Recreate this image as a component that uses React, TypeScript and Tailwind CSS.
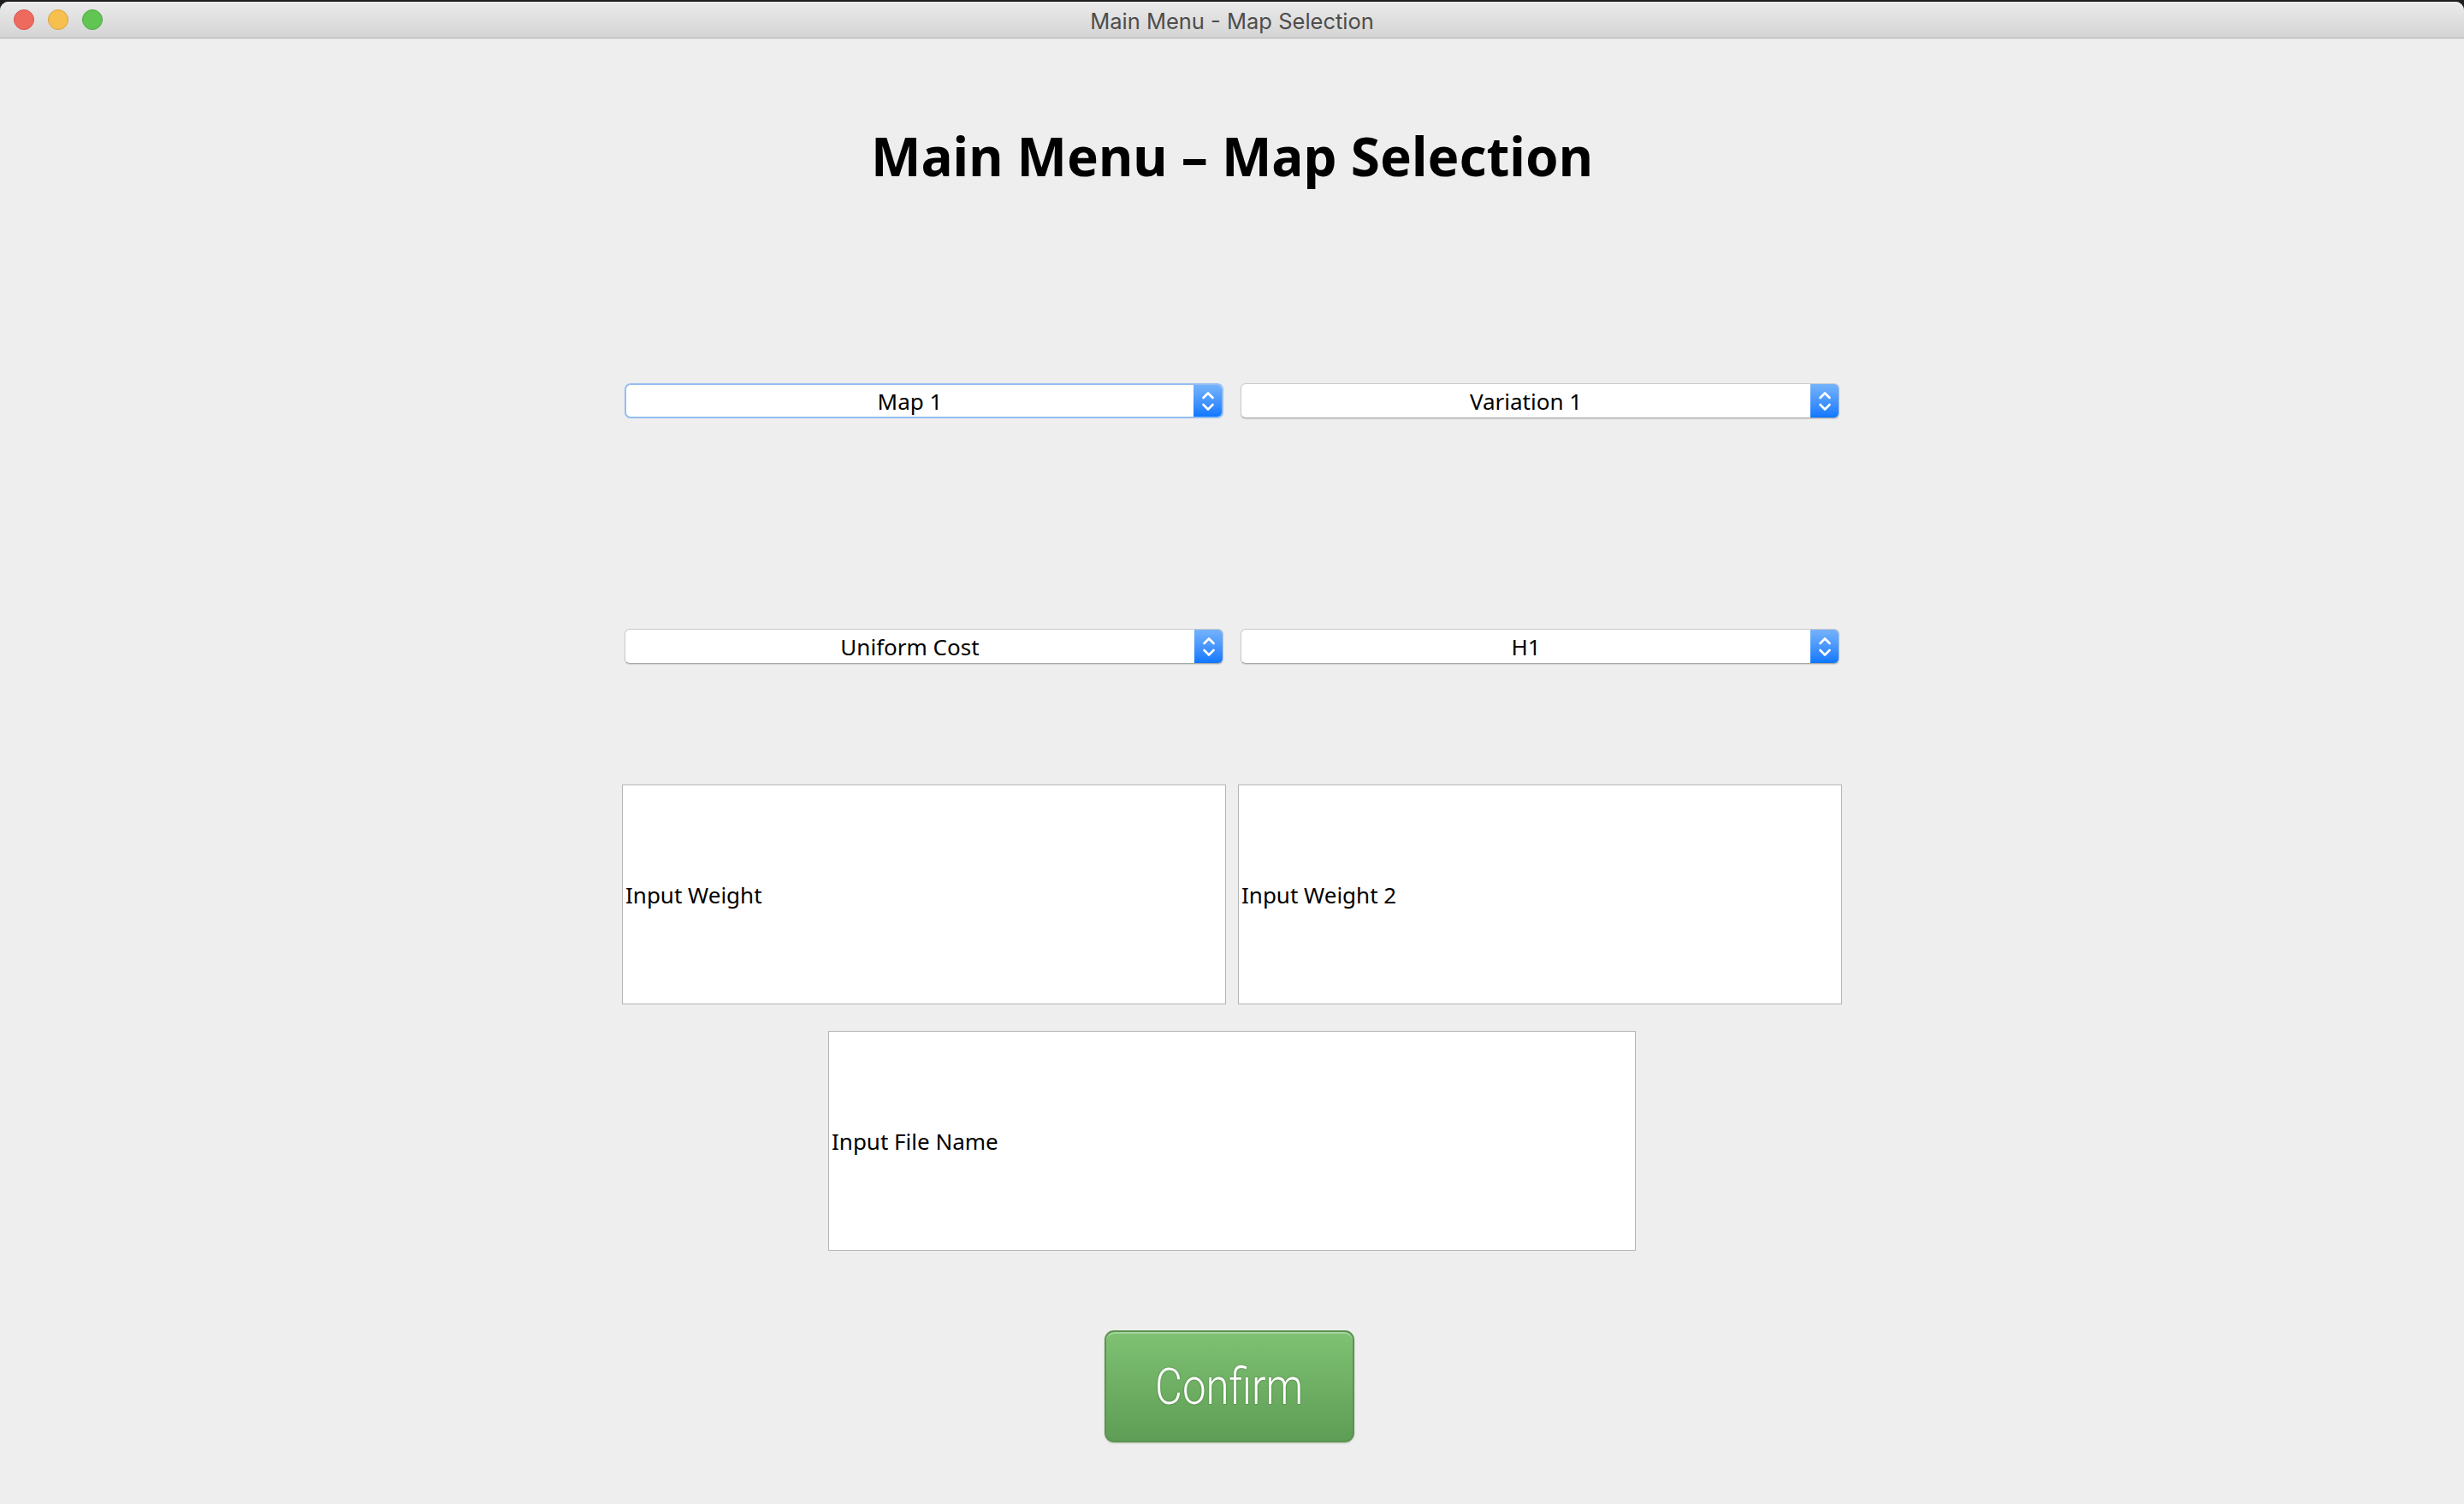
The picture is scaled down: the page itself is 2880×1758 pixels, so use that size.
import React from "react";

const sans = { fontFamily: '"Noto Sans", "Open Sans", sans-serif' };

function Chevrons() {
  return (
    <svg width="16" height="26" viewBox="0 0 16 26" fill="none" stroke="white" strokeWidth="2.6" strokeLinecap="round" strokeLinejoin="round">
      <path d="M2.5 9 L8 3.5 L13.5 9" />
      <path d="M2.5 17 L8 22.5 L13.5 17" />
    </svg>
  );
}

function Combo({ label, focused = false }: { label: string; focused?: boolean }) {
  return (
    <div
      className={
        focused
          ? "flex h-[41px] w-[700px] overflow-hidden rounded-[7px] border-2 border-[#93bdf2] bg-white"
          : "flex h-[41px] w-[700px] overflow-hidden rounded-[6px] border border-[#c9c9c9] border-b-[#a8a8a8] bg-white shadow-[0_1px_1px_rgba(0,0,0,0.12)]"
      }
    >
      <div className="flex flex-1 items-center justify-center text-[26px] leading-none text-black">{label}</div>
      <div className="flex w-[33px] items-center justify-center bg-gradient-to-b from-[#74b3fb] to-[#0a77ff]">
        <Chevrons />
      </div>
    </div>
  );
}

function Field({ label, width }: { label: string; width: string }) {
  return (
    <div className={`flex h-[257px] ${width} items-center border border-[#b5b5b5] bg-white pl-[3px] text-[26px] leading-none text-black`}>
      {label}
    </div>
  );
}

export default function App() {
  return (
    <div className="min-h-screen bg-[#1e1e1e] pt-[2px]" style={sans}>
      <div className="flex h-[1756px] flex-col overflow-hidden rounded-t-[10px] bg-[#eeeeee]">
        {/* title bar */}
        <div className="grid h-[43px] grid-cols-[1fr_auto_1fr] items-center border-b border-[#b2b2b2] bg-gradient-to-b from-[#ebebeb] to-[#d4d4d4]">
          <div className="flex items-center gap-[16px] pl-[16px]">
            <span className="h-[24px] w-[24px] rounded-full border border-[#d9544b] bg-[#ee6a5f]" />
            <span className="h-[24px] w-[24px] rounded-full border border-[#d9a33e] bg-[#f6c04f]" />
            <span className="h-[24px] w-[24px] rounded-full border border-[#4ea83f] bg-[#61c554]" />
          </div>
          <div className="pt-[3px] text-[25.5px] leading-none text-[#4d4d4d]" style={{ fontFamily: 'Inter, "Liberation Sans", sans-serif' }}>
            Main Menu - Map Selection
          </div>
          <div />
        </div>

        {/* content */}
        <div className="flex flex-col items-center">
          <h1 className="mt-[102px] flex h-[70px] items-center text-[62px] font-bold leading-none text-black">
            Main Menu – Map Selection
          </h1>

          <div className="mt-[231px] flex gap-[20px]">
            <Combo label="Map 1" focused />
            <Combo label="Variation 1" />
          </div>

          <div className="mt-[246px] flex gap-[20px]">
            <Combo label="Uniform Cost" />
            <Combo label="H1" />
          </div>

          <div className="mt-[141px] flex gap-[14px]">
            <Field label="Input Weight" width="w-[706px]" />
            <Field label="Input Weight 2" width="w-[706px]" />
          </div>

          <div className="mt-[31px]">
            <Field label="Input File Name" width="w-[944px]" />
          </div>

          <button className="mt-[93px] mr-[6px] flex h-[131px] w-[292px] items-center justify-center rounded-[11px] border-2 border-[#5b944f] bg-gradient-to-b from-[#7fc273] to-[#5e9d55] shadow-[inset_0_2px_0_rgba(255,255,255,0.3),0_1px_2px_rgba(0,0,0,0.2)]">
            <span
              className="scale-x-[0.82] text-[60px] font-light leading-none text-white [text-shadow:0_0_2px_rgba(40,80,30,0.7)]"
              style={{ fontFamily: 'Roboto, "Open Sans", sans-serif' }}
            >
              Confirm
            </span>
          </button>
        </div>
      </div>
    </div>
  );
}
